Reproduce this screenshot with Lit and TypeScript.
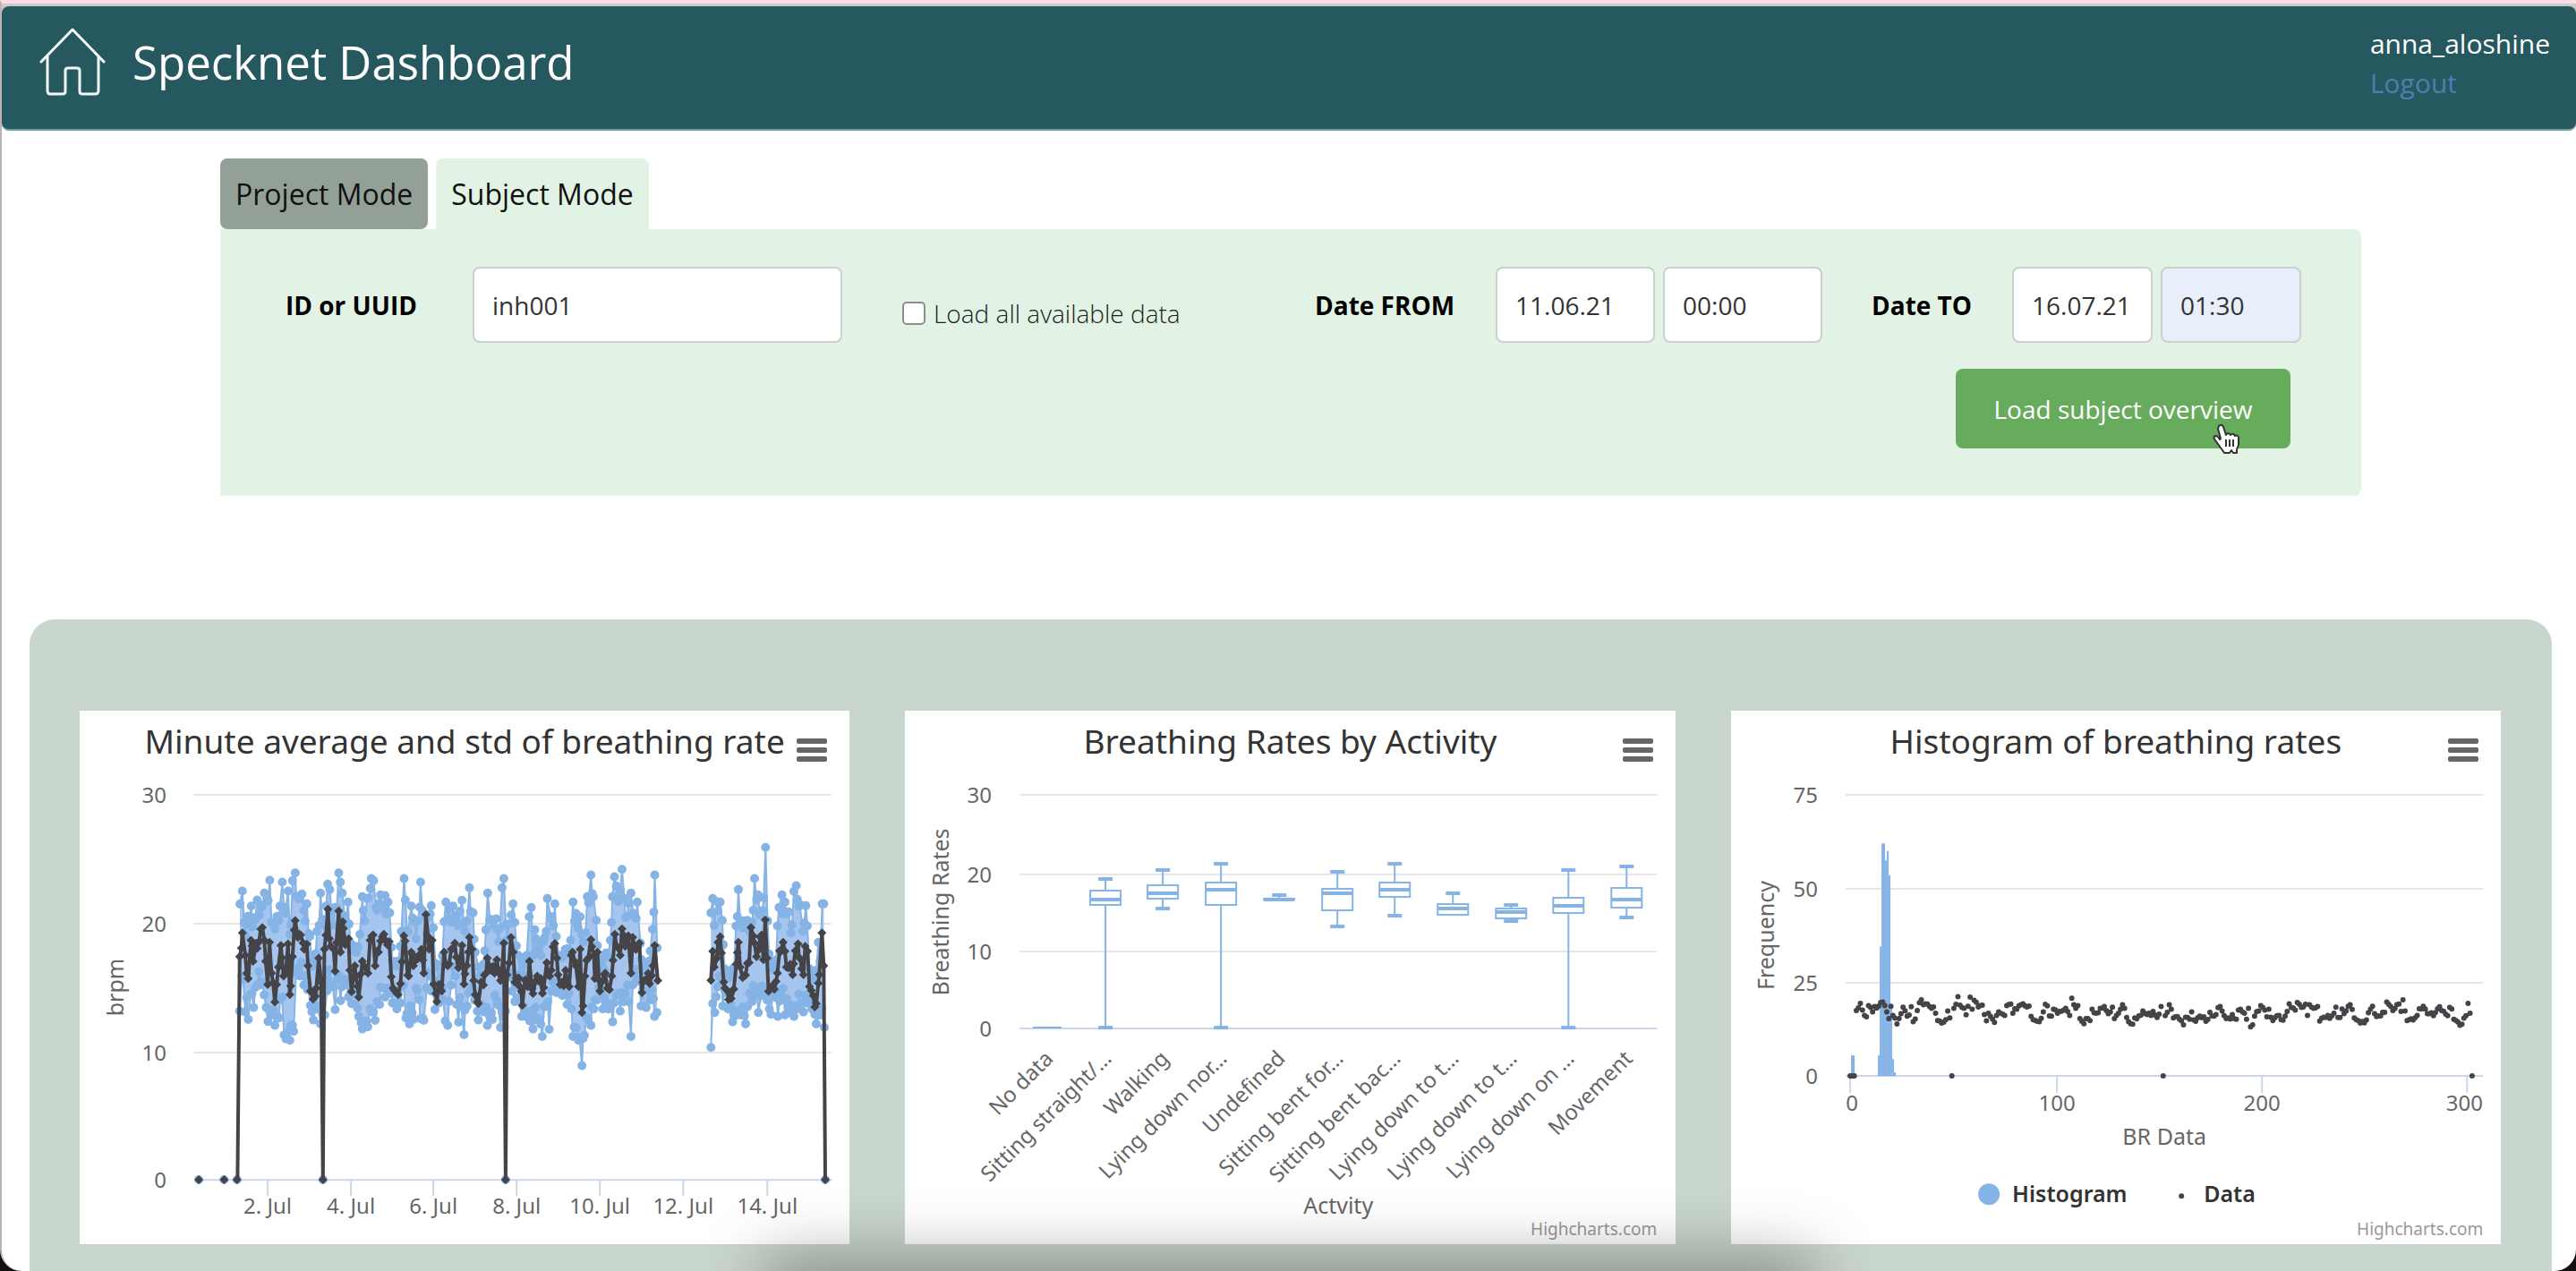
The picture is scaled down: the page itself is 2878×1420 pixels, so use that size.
import { LitElement, html, svg, css } from "lit";
import { customElement, property } from "lit/decorators.js";

type Point = [number, number];

/* Breathing-rate traces on a fine plot grid: x grows with time, y grows downwards, ZERO is 0 brpm. */
const ZERO = 1252;
const STEP = 5.9;

const parse = (text: string): Point[] =>
  text
    .trim()
    .split(/\s+/)
    .map((pair) => pair.split(",").map(Number) as Point);

const FIRST = {
  mean: parse(`203,505 212,425 222,500 232,578 241,450 248,520 258,460 268,455 279,407 290,520 297,598 303,457
    310,560 321,657 333,540 341,467 350,570 358,555 365,462 371,632 380,505 389,384 398,440 407,432 419,480
    428,463 432,535 440,620 449,647 460,610 468,510 476,590 482,1252 487,480 499,346 508,470 518,480 523,553
    535,352 541,490 548,388 560,450 568,445 572,550 578,622 589,535 602,640 614,520 626,545 633,560 640,450
    650,432 657,535 668,490 686,430 698,465 708,475 711,572 717,610 730,628 742,595 747,522 753,435 766,567
    778,490 785,535 803,500 812,480 820,560 827,364 838,480 848,450 853,597 860,628 880,620 888,490 900,535
    912,480 924,460 936,542 948,467 955,597 973,440 982,480 987,585 992,632 1003,662 1012,590 1020,600
    1033,510 1045,550 1057,560 1065,515 1077,585 1088,460 1094,1252 1099,565 1112,440 1120,490 1125,590
    1137,575 1150,668 1162,585 1168,605 1174,520 1186,628 1200,570 1222,608 1232,525 1242,570 1253,472
    1266,510 1270,565 1283,590 1295,550 1307,605 1314,500 1325,520 1338,605 1344,480 1350,692 1360,570
    1371,510 1380,448 1390,500 1393,578 1402,490 1410,620 1428,560 1435,610 1450,570 1454,517 1460,430
    1478,500 1484,412 1495,470 1505,435 1514,560 1520,440 1542,460 1546,517 1551,625 1565,585 1577,595
    1588,535 1594,467 1604,585`),
  high: parse(`204,328 212,285 218,390 230,370 242,335 255,380 262,315 275,340 286,292 295,310 304,249 310,390
    318,400 328,370 338,335 346,255 355,360 365,285 372,430 380,250 389,224 398,310 412,295 418,350 428,328
    438,437 450,520 462,420 474,292 480,380 487,400 498,262 505,280 515,400 523,340 535,224 547,292 555,370
    566,322 575,460 590,470 606,430 614,304 622,385 630,310 644,243 652,250 660,340 675,298 690,300 700,322
    706,358 715,520 735,520 745,420 754,243 758,315 768,420 778,335 790,390 800,385 809,255 815,350 825,370
    838,370 845,334 852,408 865,540 878,530 888,388 894,322 905,345 918,335 930,365 948,316 958,420 973,274
    985,358 992,490 1003,540 1020,530 1028,415 1034,292 1045,380 1062,378 1075,410 1082,274 1088,243
    1095,400 1105,395 1119,328 1125,390 1137,500 1150,520 1165,500 1173,371 1180,340 1186,500 1192,415
    1220,455 1230,420 1234,310 1245,370 1259,328 1264,437 1280,500 1294,480 1312,450 1320,322 1330,360
    1344,371 1350,430 1362,425 1368,304 1380,231 1388,304 1398,383 1410,510 1430,493 1445,450 1452,304
    1459,237 1465,268 1472,320 1484,212 1492,310 1505,325 1514,292 1522,360 1535,322 1542,328 1546,460
    1560,530 1575,520 1586,413 1594,231 1602,475`),
  low: parse(`203,687 210,570 222,690 232,715 240,630 250,675 262,600 272,600 285,633 292,675 298,722 310,700
    321,735 335,710 345,640 352,767 358,780 371,785 384,755 392,560 405,570 418,600 430,615 440,668 450,717
    462,670 474,730 488,700 495,620 510,600 523,682 530,580 541,652 555,580 568,640 578,662 590,665 602,705
    614,747 632,740 645,690 657,718 672,665 690,640 700,610 715,660 730,680 742,660 752,600 760,710 772,730
    785,715 795,610 808,712 820,718 830,610 845,620 857,682 870,660 885,650 892,720 900,735 912,600 925,570
    930,665 937,724 945,670 955,766 965,670 975,620 990,650 1003,717 1020,690 1033,735 1050,715 1065,650
    1077,742 1090,740 1105,560 1115,620 1125,655 1140,640 1148,705 1162,705 1175,720 1186,747 1204,712
    1217,772 1230,672 1240,748 1248,620 1265,625 1285,635 1300,665 1315,680 1320,772 1338,785 1350,870
    1358,768 1370,715 1380,735 1390,680 1400,650 1420,680 1438,680 1453,723 1458,660 1478,687 1490,656
    1502,600 1514,772 1520,600 1535,580 1548,670 1565,675 1580,650 1593,705 1601,692`),
};

const SECOND = {
  mean: parse(`1782,584 1788,487 1793,540 1802,510 1813,438 1822,500 1825,590 1838,620 1850,645 1862,645
    1867,530 1874,457 1880,540 1898,567 1904,527 1910,525 1916,407 1928,460 1935,505 1952,432 1958,515
    1964,382 1970,510 1975,621 1990,600 2005,560 2017,487 2030,487 2035,540 2048,530 2056,565 2065,485
    2074,462 2086,545 2092,565 2098,470 2106,487 2112,605 2125,635 2135,662 2145,565 2154,425 2160,535
    2165,1252`),
  high: parse(`1782,358 1788,310 1793,400 1802,320 1813,322 1820,383 1828,545 1850,550 1860,540 1866,402
    1874,280 1880,390 1892,385 1904,383 1920,390 1928,243 1940,298 1946,365 1955,350 1965,139 1972,385
    1980,520 1995,520 2005,402 2010,340 2020,298 2030,322 2042,355 2050,425 2060,286 2068,267 2080,330
    2090,420 2100,334 2105,402 2112,545 2135,550 2142,457 2148,520 2155,328 2160,328`),
  low: parse(`1782,809 1788,662 1795,692 1810,570 1822,670 1840,680 1855,723 1870,700 1885,700 1898,730
    1905,672 1920,655 1932,632 1941,692 1950,635 1965,630 1978,680 1983,698 1995,640 2006,705 2020,640
    2030,700 2042,690 2060,705 2080,680 2092,690 2105,660 2120,680 2135,730 2148,700 2162,742`),
};

/* Repeatable spread for the hours between two turning points. */
const spread = (n: number): number => {
  const s = Math.sin(n * 12.9898) * 43758.5453;
  return s - Math.floor(s);
};

/* One sample per hour: turning points are kept, hours between them are interpolated. */
function hourly(points: Point[], noise: (n: number) => number): Point[] {
  const [start] = points[0];
  const count = Math.round((points[points.length - 1][0] - start) / STEP) + 1;
  const out: Point[] = [];
  let k = 0;
  for (let i = 0; i < count; i++) {
    const x = start + i * STEP;
    while (k < points.length - 2 && points[k + 1][0] < x) k++;
    const [x0, y0] = points[k][1] === ZERO ? points[k + 1] : points[k];
    const [x1, y1] = points[k + 1][1] === ZERO ? points[k] : points[k + 1];
    const share = x1 === x0 ? 0 : Math.min(1, Math.max(0, (x - x0) / (x1 - x0)));
    out.push([x, y0 + (y1 - y0) * share + noise(i + start)]);
  }
  for (const [x, y] of points) {
    const i = Math.min(count - 1, Math.round((x - start) / STEP));
    out[i] = [x, y];
  }
  return out;
}

const build = (trace: typeof FIRST) => ({
  mean: hourly(trace.mean, (n) => (spread(n) - 0.5) * 64),
  high: hourly(trace.high, (n) => spread(n + 5) * 60),
  low: hourly(trace.low, (n) => -spread(n + 9) * 60),
});

const SEGMENTS = [build(FIRST), build(SECOND)];

const px = (x: number) => Math.round((111 + x / 3) * 10) / 10;
const py = (y: number) => Math.round((106.5 + y / 3) * 10) / 10;
const line = (points: Point[]) => points.map(([x, y]) => `${px(x)},${py(y)}`).join(" ");

const circles = (points: Point[], r: number) =>
  points.map(([x, y]) => `M${px(x) - r},${py(y)}a${r},${r} 0 1 0 ${2 * r},0a${r},${r} 0 1 0 ${-2 * r},0z`).join("");
const diamonds = (points: Point[], r: number) =>
  points.map(([x, y]) => `M${px(x)},${py(y) - r}l${r},${r}l${-r},${r}l${-r},${-r}z`).join("");

const IDLE: Point[] = [
  [66, ZERO],
  [151, ZERO],
  [194, ZERO],
  [482, ZERO],
  [1094, ZERO],
  [2165, ZERO],
];

const DATES: [number, string][] = [
  [210, "2. Jul"],
  [303, "4. Jul"],
  [395, "6. Jul"],
  [488, "8. Jul"],
  [581, "10. Jul"],
  [674, "12. Jul"],
  [768, "14. Jul"],
];

/* name, minimum, lower quartile, median, upper quartile, maximum */
const ACTIVITIES: [string, number, number, number, number, number][] = [
  ["No data", 0.1, 0.1, 0.1, 0.1, 0.1],
  ["Sitting straight/…", 0.1, 15.9, 16.6, 17.7, 19.2],
  ["Walking", 15.4, 16.7, 17.3, 18.4, 20.3],
  ["Lying down nor…", 0.1, 15.9, 17.8, 18.7, 21.1],
  ["Undefined", 16.6, 16.6, 16.6, 16.7, 17.1],
  ["Sitting bent for…", 13.1, 15.2, 17.3, 17.9, 20.1],
  ["Sitting bent bac…", 14.5, 16.9, 17.8, 18.7, 21.1],
  ["Lying down to t…", 14.6, 14.6, 15.4, 16, 17.3],
  ["Lying down to t…", 13.8, 14.1, 15, 15.4, 15.9],
  ["Lying down on …", 0.1, 14.8, 15.7, 16.8, 20.3],
  ["Movement", 14.2, 15.5, 16.6, 18.1, 20.8],
];

/* left edge, width, count */
const BINS: [number, number, number][] = [
  [134, 4, 5.5],
  [164, 2, 5.5],
  [166, 2, 34.5],
  [168, 4, 62],
  [172, 2, 57.5],
  [174, 2, 60],
  [176, 2, 53.5],
  [178, 2, 19],
  [180, 2, 4.5],
  [182, 2, 1],
];

const chartText = css`
  svg {
    display: block;
    width: 100%;
    height: auto;
    font-family: "Noto Sans", "DejaVu Sans", sans-serif;
    fill: #666;
  }
  .tick-text {
    font-size: 24px;
  }
  .axis-title,
  .legend {
    font-size: 25px;
  }
  .legend {
    font-weight: 600;
    fill: #333;
  }
  .credit {
    font-size: 19px;
    fill: #999;
  }
  .end {
    text-anchor: end;
  }
  .mid {
    text-anchor: middle;
  }
  .grid {
    stroke: #e6e6e6;
    stroke-width: 2;
  }
  .axis {
    stroke: #ccd6eb;
    stroke-width: 2;
  }
  .blue {
    fill: #86b3e6;
  }
  .blue-line {
    fill: none;
    stroke: #86b3e6;
    stroke-width: 2;
  }
  .thick {
    stroke: #86b3e6;
    stroke-width: 4;
  }
  .range {
    fill: #a5c5ee;
  }
  .dark {
    fill: #434348;
  }
  .dark-line {
    fill: none;
    stroke: #434348;
    stroke-width: 4;
    stroke-linejoin: round;
  }
  .box {
    fill: #fff;
    stroke: #86b3e6;
    stroke-width: 2;
  }
`;

@customElement("chart-card")
export class ChartCard extends LitElement {
  @property() heading = "";

  static styles = css`
    :host {
      display: block;
      position: relative;
      background: #fff;
    }
    h2 {
      margin: 0;
      padding: 10px 0 6px;
      font: 400 37px/48px "Noto Sans", "DejaVu Sans", sans-serif;
      color: #333;
      text-align: center;
      white-space: nowrap;
    }
    button {
      position: absolute;
      top: 20px;
      right: 15px;
      display: flex;
      flex-direction: column;
      gap: 4px;
      padding: 11px 10px;
      border: 0;
      background: none;
      cursor: pointer;
    }
    .bar {
      width: 34px;
      height: 6px;
      border-radius: 2px;
      background: #666;
    }
  `;

  render() {
    return html`
      <h2>${this.heading}</h2>
      <button aria-label="Chart menu">
        <span class="bar"></span><span class="bar"></span><span class="bar"></span>
      </button>
      <slot></slot>
    `;
  }
}

@customElement("rate-chart")
export class RateChart extends LitElement {
  static styles = [chartText, css`:host { display: block; }`];

  render() {
    const rows: [number, number][] = [[30, 94], [20, 238], [10, 382], [0, 524]];
    return html`
      <svg viewBox="0 64 860 532" role="img" aria-label="Minute average and std of breathing rate">
        ${rows.map(
          ([value, y]) => svg`
            <line class=${value ? "grid" : "axis"} x1="128" x2="840" y1=${y} y2=${y}></line>
            <text class="tick-text end" x="97" y=${y + 9}>${value}</text>`,
        )}
        ${DATES.map(
          ([x, label]) => svg`
            <line class="axis" x1=${x} x2=${x} y1="524" y2="542"></line>
            <text class="tick-text mid" x=${x} y="562">${label}</text>`,
        )}
        <text class="axis-title mid" transform="translate(49 309) rotate(-90)">brpm</text>
        ${SEGMENTS.map(
          ({ high, low }) => svg`
            <polygon class="range" points=${line([...high, ...[...low].reverse()])}></polygon>
            <polyline class="blue-line" points=${line(high)}></polyline>
            <polyline class="blue-line" points=${line(low)}></polyline>
            <path class="blue" d=${circles([...high, ...low], 5)}></path>`,
        )}
        <path class="blue" d=${circles(IDLE, 5)}></path>
        <polyline class="dark-line" points=${line([[196, ZERO], ...SEGMENTS[0].mean])}></polyline>
        <polyline class="dark-line" points=${line(SEGMENTS[1].mean)}></polyline>
        <path class="dark" d=${diamonds([...IDLE, ...SEGMENTS[0].mean, ...SEGMENTS[1].mean], 5)}></path>
      </svg>
    `;
  }
}

@customElement("activity-chart")
export class ActivityChart extends LitElement {
  static styles = [chartText, css`:host { display: block; }`];

  private column([name, min, q1, median, q3, max]: (typeof ACTIVITIES)[number], index: number) {
    const x = 159 + Math.round(index * 64.7);
    const y = (value: number) => Math.round(355 - value * 8.7);
    const cap = (value: number) =>
      svg`<line class="thick" x1=${x - 8} x2=${x + 8} y1=${y(value)} y2=${y(value)}></line>`;
    const label = svg`<text class="tick-text end" transform="translate(${x + 8} 390) rotate(-45)">${name}</text>`;
    if (max < 1) {
      return svg`<line class="blue-line" x1=${x - 16} x2=${x + 16} y1="354" y2="354"></line>${label}`;
    }
    return svg`
      <line class="blue-line" x1=${x} x2=${x} y1=${y(max)} y2=${y(min)}></line>
      <rect class="box" x=${x - 17} y=${y(q3)} width="34" height=${y(q1) - y(q3)}></rect>
      <line class="thick" x1=${x - 17} x2=${x + 17} y1=${y(median)} y2=${y(median)}></line>
      ${cap(max)} ${min < q1 ? cap(min) : null} ${label}`;
  }

  render() {
    const rows: [number, number][] = [[30, 94], [20, 183], [10, 269], [0, 355]];
    return html`
      <svg viewBox="0 64 860 532" role="img" aria-label="Breathing Rates by Activity">
        ${rows.map(
          ([value, y]) => svg`
            <line class=${value ? "grid" : "axis"} x1="128" x2="840" y1=${y} y2=${y}></line>
            <text class="tick-text end" x="97" y=${y + 9}>${value}</text>`,
        )}
        <text class="axis-title mid" transform="translate(49 225) rotate(-90)">Breathing Rates</text>
        ${ACTIVITIES.map((item, i) => this.column(item, i))}
        <text class="axis-title mid" x="484" y="562">Actvity</text>
        <a href="https://www.highcharts.com"><text class="credit end" x="840" y="586">Highcharts.com</text></a>
      </svg>
    `;
  }
}

@customElement("histogram-chart")
export class HistogramChart extends LitElement {
  static styles = [chartText, css`:host { display: block; }`];

  private dots(): string {
    const scale = 4.19 * (10 / 428);
    const dot = (index: number, y: number) => {
      const cx = Math.round((133 + index * 2.3) * 10) / 10;
      const cy = Math.round((408 - (ZERO - y) * scale) * 10) / 10;
      return `M${cx - 3},${cy}a3,3 0 1 0 6,0a3,3 0 1 0 -6,0z`;
    };
    const means = [...SEGMENTS[0].mean, ...SEGMENTS[1].mean];
    return (
      [0, 1, 2].map((i) => dot(i, ZERO)).join("") +
      means.map(([, y], i) => dot(3 + (i * 299) / (means.length - 1), y)).join("")
    );
  }

  render() {
    const rows: [number, number][] = [[75, 94], [50, 199], [25, 304], [0, 408]];
    const columns: [number, number, number][] = [[0, 133, 135], [100, 364, 364], [200, 593, 593], [300, 822, 819]];
    return html`
      <svg viewBox="0 64 860 532" role="img" aria-label="Histogram of breathing rates">
        ${rows.map(
          ([value, y]) => svg`
            <line class=${value ? "grid" : "axis"} x1="128" x2="840" y1=${y} y2=${y}></line>
            <text class="tick-text end" x="97" y=${y + 9}>${value}</text>`,
        )}
        ${columns.map(
          ([value, x, labelX]) => svg`
            <line class="axis" x1=${x} x2=${x} y1="408" y2="427"></line>
            <text class="tick-text mid" x=${labelX} y="447">${value}</text>`,
        )}
        <text class="axis-title mid" transform="translate(48 251) rotate(-90)">Frequency</text>
        ${BINS.map(
          ([x, width, count]) => svg`
            <rect class="blue" x=${x} y=${408 - count * 4.19} width=${width} height=${count * 4.19}></rect>`,
        )}
        <path class="dark" d=${this.dots()}></path>
        <text class="axis-title mid" x="484" y="485">BR Data</text>
        <circle class="blue" cx="288" cy="540" r="12"></circle>
        <text class="legend" x="314" y="549">Histogram</text>
        <circle class="dark" cx="503" cy="542" r="3"></circle>
        <text class="legend" x="528" y="549">Data</text>
        <a href="https://www.highcharts.com"><text class="credit end" x="840" y="586">Highcharts.com</text></a>
      </svg>
    `;
  }
}

@customElement("app-root")
export class AppRoot extends LitElement {
  static styles = css`
    :host {
      display: block;
      background: #15100f;
      font-family: "Open Sans", "Noto Sans", sans-serif;
    }
    * {
      box-sizing: border-box;
    }
    .window {
      position: relative;
      display: flex;
      flex-direction: column;
      min-height: 100vh;
      overflow: hidden;
      border-top: 4px solid #f8dde3;
      border-left: 2px solid #bdb2b5;
      border-radius: 0 0 24px 24px;
      background: #fff;
    }
    .top {
      padding-top: 3px;
      background: linear-gradient(#cbcbcb 50%, #fff 50%);
    }
    header {
      display: flex;
      align-items: flex-start;
      height: 139px;
      padding: 20px 29px 0 42px;
      border-bottom: 2px solid #6d9fa2;
      border-radius: 8px;
      background: #26595f;
      color: #fff;
    }
    .home {
      flex: none;
      width: 74px;
      height: 80px;
      margin-top: 2px;
    }
    .home svg {
      display: block;
      fill: none;
      stroke: #f2fbfb;
      stroke-width: 3;
      stroke-linecap: round;
      stroke-linejoin: round;
    }
    h1 {
      flex: 1;
      margin: 0 0 0 30px;
      font-size: 51px;
      font-weight: 400;
      line-height: 84px;
    }
    .account {
      display: flex;
      flex-direction: column;
      font-size: 30px;
      line-height: 44px;
    }
    .account a {
      color: #4a80b0;
      text-decoration: none;
    }
    .query {
      margin: 31px 240px 0 244px;
    }
    .tabs {
      display: flex;
      gap: 9px;
    }
    .tab {
      height: 79px;
      padding: 0 17px;
      border: 0;
      border-radius: 8px;
      background: #93a097;
      font: 400 32px/40px "Open Sans", sans-serif;
      color: #111;
    }
    .tab.active {
      border-radius: 8px 8px 0 0;
      background: #e2f3e5;
    }
    .panel {
      padding: 42px 67px 53px 73px;
      border-radius: 0 8px 8px 0;
      background: #e2f3e5;
    }
    .fields {
      display: grid;
      grid-template-columns:
        minmax(0, 209fr) minmax(0, 413fr) minmax(0, 528fr) minmax(0, 202fr)
        minmax(0, 365fr) minmax(0, 212fr) minmax(0, 323fr);
      align-items: center;
    }
    .name {
      font-size: 28px;
      font-weight: 700;
      color: #000;
      white-space: nowrap;
    }
    .name.later {
      padding-left: 55px;
    }
    .text {
      width: 100%;
      min-width: 0;
      height: 85px;
      padding: 0 20px;
      border: 2px solid #ccd0cd;
      border-radius: 8px;
      background: #fff;
      font: 400 28px/40px "Open Sans", sans-serif;
      color: #333;
    }
    .text.filled {
      background: #e8effb;
    }
    .pair {
      display: flex;
      gap: 9px;
    }
    .all {
      display: flex;
      align-items: center;
      gap: 9px;
      padding: 18px 0 0 67px;
      font-size: 28px;
      font-weight: 300;
      color: #222;
      white-space: nowrap;
    }
    .check {
      flex: none;
      appearance: none;
      width: 26px;
      height: 26px;
      margin: 0;
      border: 2px solid #8b8f8c;
      border-radius: 5px;
      background: #fff;
    }
    .actions {
      display: flex;
      justify-content: flex-end;
      padding: 29px 12px 0 0;
    }
    .submit {
      position: relative;
    }
    .load {
      height: 89px;
      min-width: 374px;
      padding: 0 36px;
      border: 0;
      border-radius: 8px;
      background: #67ac5c;
      font: 400 28px/40px "Open Sans", sans-serif;
      color: #fff;
    }
    .pointer {
      position: absolute;
      top: 61px;
      left: 286px;
    }
    .results {
      flex: 1;
      display: grid;
      grid-template-columns: repeat(3, minmax(0, 1fr));
      align-items: start;
      gap: 62px;
      margin: 138px 27px 0 31px;
      padding: 102px 57px 30px 56px;
      border-radius: 28px 28px 0 0;
      background: #c9d6cd;
    }
    .shade {
      position: absolute;
      left: 30%;
      right: 30%;
      bottom: -40px;
      height: 40px;
      box-shadow: 0 0 72px 12px rgba(0, 0, 0, 0.38);
      pointer-events: none;
    }
  `;

  render() {
    return html`
      <div class="window">
        <div class="top">
          <header>
            <a class="home" href="#" aria-label="Home">
              <svg width="74" height="80" viewBox="0 0 74 80">
                <path d="M2 40 37 4 72 40"></path>
                <path d="M9 34V72Q9 76 12 76H26Q29 76 29 73V50Q29 47 32 47H42Q45 47 45 50V73Q45 76 48 76H62Q66 76 66 72V34"></path>
              </svg>
            </a>
            <h1>Specknet Dashboard</h1>
            <div class="account">
              <span>anna_aloshine</span>
              <a href="#">Logout</a>
            </div>
          </header>
        </div>
        <form class="query" @submit=${(e: Event) => e.preventDefault()}>
          <div class="tabs">
            <button class="tab" type="button">Project Mode</button>
            <button class="tab active" type="button">Subject Mode</button>
          </div>
          <div class="panel">
            <div class="fields">
              <label class="name" for="subject">ID or UUID</label>
              <input class="text" id="subject" type="text" value="inh001" />
              <label class="all"><input class="check" type="checkbox" />Load all available data</label>
              <label class="name" for="from">Date FROM</label>
              <div class="pair">
                <input class="text" id="from" type="text" value="11.06.21" />
                <input class="text" type="text" aria-label="Time FROM" value="00:00" />
              </div>
              <label class="name later" for="to">Date TO</label>
              <div class="pair">
                <input class="text" id="to" type="text" value="16.07.21" />
                <input class="text filled" type="text" aria-label="Time TO" value="01:30" />
              </div>
            </div>
            <div class="actions">
              <div class="submit">
                <button class="load" type="submit">Load subject overview</button>
                <svg class="pointer" width="34" height="36" viewBox="0 0 34 36" aria-hidden="true">
                  <path
                    d="M8 3Q11 0 13 4L16 13Q18 9 21 13Q24 10 26 14Q30 12 30 17V24L28 29V33H24L22 30L20 33H14L12 30L4 19Q1 15 4 14Q7 14 9 18L10 17L7 6Z"
                    fill="#fff" stroke="#333" stroke-width="2" stroke-linejoin="round"></path>
                  <path d="M16 18V26M20 18V26M24 18V26" stroke="#333" stroke-width="2"></path>
                </svg>
              </div>
            </div>
          </div>
        </form>
        <main class="results">
          <chart-card heading="Minute average and std of breathing rate"><rate-chart></rate-chart></chart-card>
          <chart-card heading="Breathing Rates by Activity"><activity-chart></activity-chart></chart-card>
          <chart-card heading="Histogram of breathing rates"><histogram-chart></histogram-chart></chart-card>
        </main>
        <div class="shade"></div>
      </div>
    `;
  }
}
